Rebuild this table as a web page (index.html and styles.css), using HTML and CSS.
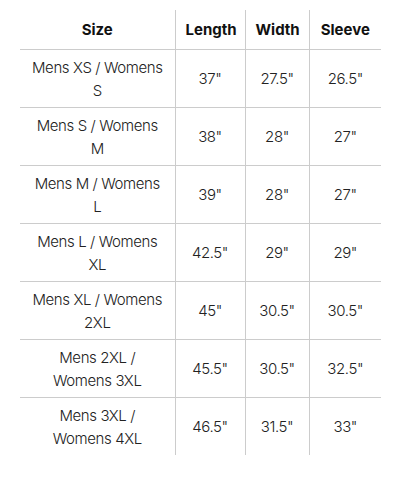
FILE: index.html
```html
<!DOCTYPE html>
<html>
<head>
<meta charset="utf-8">
<link rel="stylesheet" href="styles.css">
</head>
<body>
<table class="size-table">
  <colgroup>
    <col class="c-size"><col class="c-len"><col class="c-wid"><col class="c-sl">
  </colgroup>
  <thead>
    <tr><th>Size</th><th>Length</th><th>Width</th><th>Sleeve</th></tr>
  </thead>
  <tbody>
    <tr><td>Mens XS / Womens S</td><td>37"</td><td>27.5"</td><td>26.5"</td></tr>
    <tr><td>Mens S / Womens M</td><td>38"</td><td>28"</td><td>27"</td></tr>
    <tr><td>Mens M / Womens L</td><td>39"</td><td>28"</td><td>27"</td></tr>
    <tr><td>Mens L / Womens XL</td><td>42.5"</td><td>29"</td><td>29"</td></tr>
    <tr><td>Mens XL / Womens 2XL</td><td>45"</td><td>30.5"</td><td>30.5"</td></tr>
    <tr><td>Mens 2XL / Womens 3XL</td><td>45.5"</td><td>30.5"</td><td>32.5"</td></tr>
    <tr><td>Mens 3XL / Womens 4XL</td><td>46.5"</td><td>31.5"</td><td>33"</td></tr>
  </tbody>
</table>
</body>
</html>
```

FILE: styles.css
```css
html, body {
  margin: 0;
  padding: 0;
  background: #fff;
}
body {
  padding: 10px 0 0 20px;
  font-family: Inter, "Liberation Sans", sans-serif;
  font-size: 15px;
  line-height: 23px;
  color: #222;
}
.size-table {
  border-collapse: collapse;
  table-layout: fixed;
  width: 361px;
}
.c-size { width: 155px; }
.c-len { width: 70px; }
.c-wid { width: 64px; }
.c-sl { width: 72px; }
.size-table th,
.size-table td {
  border: 1px solid #ccc;
  text-align: center;
  vertical-align: middle;
  padding: 0 10px;
}
.size-table tr:first-child th { border-top: none; }
.size-table tr:last-child td { border-bottom: none; }
.size-table th:first-child, .size-table td:first-child { border-left: none; }
.size-table th:last-child, .size-table td:last-child { border-right: none; }
.size-table th {
  font-weight: 700;
  color: #111;
  height: 39px;
}
.size-table td {
  height: 57px;
  font-weight: 300;
  letter-spacing: -0.4px;
}
```
